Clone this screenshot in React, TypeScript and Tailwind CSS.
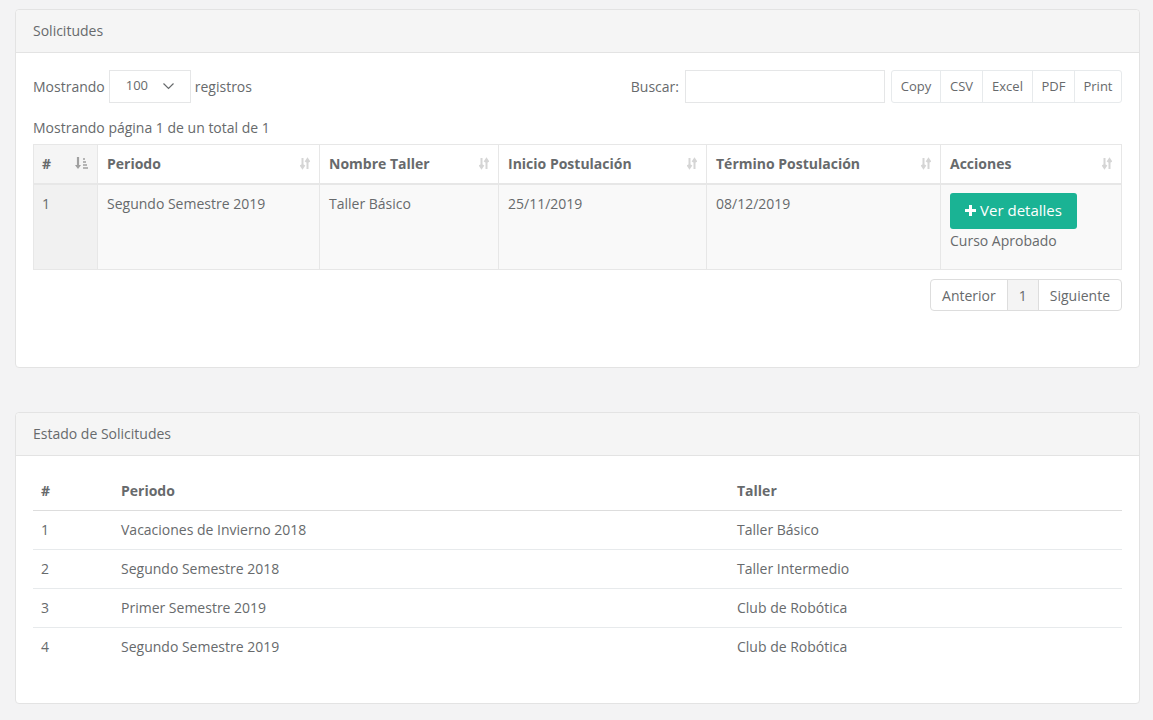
import React from "react";

const SortBoth = () => (
  <svg width="10" height="13" viewBox="0 0 10 13" className="text-[#d5d5d5]">
    <path d="M2.5 1v9M0.5 8l2 3 2-3" stroke="currentColor" strokeWidth="2" fill="none" />
    <path d="M7.5 12V3M5.5 5l2-3 2 3" stroke="currentColor" strokeWidth="2" fill="none" />
  </svg>
);

const SortAsc = () => (
  <svg width="14" height="13" viewBox="0 0 14 13" className="text-[#a0a0a0]">
    <path d="M3 0v10" stroke="currentColor" strokeWidth="2.2" />
    <path d="M0 8h6l-3 4z" fill="currentColor" />
    <path d="M8 2h2M8 5h3M8 8h4M8 11h5" stroke="currentColor" strokeWidth="1.4" />
  </svg>
);

const Panel = ({ title, children, bodyClass }: { title: string; children: React.ReactNode; bodyClass: string }) => (
  <div className="rounded-[4px] border border-[#e3e3e3] bg-white">
    <div className="flex h-[43px] items-center rounded-t-[4px] border-b border-[#e3e3e3] bg-[#f5f5f5] px-[17px] pb-[1px] text-[14px]">
      {title}
    </div>
    <div className={bodyClass}>{children}</div>
  </div>
);

const cols = [
  { label: "Periodo", w: "w-[222px]" },
  { label: "Nombre Taller", w: "w-[179px]" },
  { label: "Inicio Postulación", w: "w-[208px]" },
  { label: "Término Postulación", w: "w-[234px]" },
  { label: "Acciones", w: "" },
];

const buttons = [
  { label: "Copy", w: "w-[48px]" },
  { label: "CSV", w: "w-[42px]" },
  { label: "Excel", w: "w-[50px]" },
  { label: "PDF", w: "w-[42px]" },
  { label: "Print", w: "w-[47px]" },
];

const estados = [
  ["1", "Vacaciones de Invierno 2018", "Taller Básico"],
  ["2", "Segundo Semestre 2018", "Taller Intermedio"],
  ["3", "Primer Semestre 2019", "Club de Robótica"],
  ["4", "Segundo Semestre 2019", "Club de Robótica"],
];

export default function App() {
  return (
    <div
      className="min-h-[720px] bg-[#f3f3f4] pb-4 pl-[15px] pr-[13px] pt-[9px] text-[14px] text-[#676a6c]"
      style={{ fontFamily: '"Open Sans", "Liberation Sans", sans-serif' }}
    >
      <Panel title="Solicitudes" bodyClass="px-[17px] pt-[16px] pb-[56px]">
        <div className="flex items-center justify-between">
          <div className="flex items-center">
            <span className="mr-[4px]">Mostrando</span>
            <div className="flex h-[33px] w-[82px] items-center justify-between border border-[#e5e6e7] pl-[16px] pr-[16px] text-[13px]">
              <span>100</span>
              <svg width="11" height="7" viewBox="0 0 11 7">
                <path d="M0.5 0.5l5 5 5-5" stroke="#676a6c" strokeWidth="1.2" fill="none" />
              </svg>
            </div>
            <span className="ml-[4px]">registros</span>
          </div>
          <div className="flex items-center">
            <span className="mr-[6px]">Buscar:</span>
            <div className="h-[33px] w-[200px] border border-[#e5e6e7]" />
            <div className="ml-[6px] mt-[1px] flex h-[33px] rounded-[3px] border border-[#e7eaec] text-[13px]">
              {buttons.map((b, i) => (
                <div
                  key={b.label}
                  className={`flex ${b.w} items-center justify-center ${i > 0 ? "border-l border-[#e7eaec]" : ""}`}
                >
                  {b.label}
                </div>
              ))}
            </div>
          </div>
        </div>
        <div className="mb-[6px] mt-[14px]">Mostrando página 1 de un total de 1</div>
        <table className="w-full border-collapse border border-[#e7e7e7] text-left">
          <thead>
            <tr className="h-[39px] border-b-2 border-[#e7e7e7]">
              <th className="w-[64px] border-r border-[#e7e7e7] bg-[#f5f5f5] px-[8px] font-bold">
                <div className="flex items-center justify-between">
                  <span>#</span>
                  <SortAsc />
                </div>
              </th>
              {cols.map((c) => (
                <th key={c.label} className={`${c.w} border-r border-[#e7e7e7] px-[9px] font-bold`}>
                  <div className="flex items-center justify-between">
                    <span>{c.label}</span>
                    <SortBoth />
                  </div>
                </th>
              ))}
            </tr>
          </thead>
          <tbody>
            <tr className="h-[86px] bg-[#f9f9f9] align-top">
              <td className="border-r border-[#e7e7e7] bg-[#f1f1f1] px-[8px] pt-[8px]">1</td>
              <td className="border-r border-[#e7e7e7] px-[9px] pt-[8px]">Segundo Semestre 2019</td>
              <td className="border-r border-[#e7e7e7] px-[9px] pt-[8px]">Taller Básico</td>
              <td className="border-r border-[#e7e7e7] px-[9px] pt-[8px]">25/11/2019</td>
              <td className="border-r border-[#e7e7e7] px-[9px] pt-[8px]">08/12/2019</td>
              <td className="px-[9px] pt-[8px]">
                <div className="flex h-[36px] w-[127px] items-center justify-center gap-[4px] rounded-[3px] bg-[#1ab394] text-[15px] text-white">
                  <svg width="11" height="11" viewBox="0 0 11 11">
                    <path d="M5.5 0v11M0 5.5h11" stroke="white" strokeWidth="3" />
                  </svg>
                  Ver detalles
                </div>
                <div className="mt-[1px]">Curso Aprobado</div>
              </td>
            </tr>
          </tbody>
        </table>
        <div className="mt-[9px] flex justify-end">
          <div className="flex h-[32px] rounded-[4px] border border-[#dddddd] text-[14px]">
            <div className="flex items-center px-[11px]">Anterior</div>
            <div className="flex items-center border-x border-[#dddddd] bg-[#f4f4f4] px-[11px]">1</div>
            <div className="flex items-center px-[11px]">Siguiente</div>
          </div>
        </div>
      </Panel>
      <div className="h-[44px]" />
      <Panel title="Estado de Solicitudes" bodyClass="px-[17px] pt-[16px] pb-[37px]">
        <table className="w-full border-collapse text-left">
          <thead>
            <tr className="h-[38px] border-b border-[#dddddd]">
              <th className="w-[88px] px-[8px] font-bold">#</th>
              <th className="w-[616px] px-0 font-bold">Periodo</th>
              <th className="font-bold">Taller</th>
            </tr>
          </thead>
          <tbody>
            {estados.map((r, i) => (
              <tr key={r[0]} className={`h-[39px] ${i < estados.length - 1 ? "border-b border-[#e7eaec]" : ""}`}>
                <td className="px-[8px]">{r[0]}</td>
                <td>{r[1]}</td>
                <td>{r[2]}</td>
              </tr>
            ))}
          </tbody>
        </table>
      </Panel>
    </div>
  );
}
